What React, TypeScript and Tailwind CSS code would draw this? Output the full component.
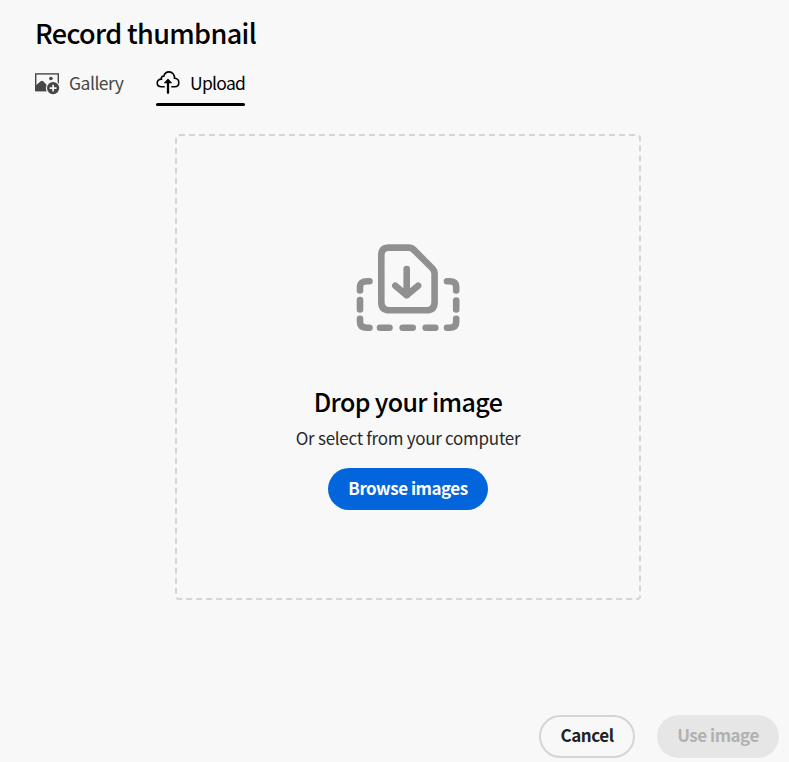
function GalleryIcon() {
  return (
    <svg width="26" height="24" viewBox="0 0 26 24" className="mt-[2px] shrink-0">
      <path d="M0 1.2H24V19.2H0Z" fill="#464646" />
      <path d="M1.4 2.6H22.6V17.8H1.4Z" fill="#f8f8f8" />
      <circle cx="15.9" cy="6.5" r="1.8" fill="#464646" />
      <path d="M0.7 19.2V13.5L5.7 9.3Q6.9 8.4 8.2 9.3L13 14.2V19.2Z" fill="#464646" />
      <circle cx="18.1" cy="16.1" r="7.3" fill="#f8f8f8" />
      <circle cx="18.1" cy="16.1" r="6.1" fill="#464646" />
      <path d="M18.1 12.7V19.5M14.7 16.1H21.5" stroke="#f8f8f8" strokeWidth="1.7" />
    </svg>
  );
}

function UploadIcon() {
  return (
    <svg width="24" height="24" viewBox="0 0 24 24" className="mt-px shrink-0" fill="none">
      <path
        d="M8.7 15.8H5.6C3 15.8 1.2 14.2 1.2 12C1.2 9.6 3.2 8 5.4 8.1C4.9 6.4 6 5 7.8 5.1C8.5 2.5 10.5 .9 13 .9C16.3 .9 18.8 3.6 18.5 7.2C21.1 7.4 22.8 9.2 22.8 11.5C22.8 14 21.1 15.8 18.7 15.8H15.3"
        stroke="#000"
        strokeWidth="1.6"
      />
      <path d="M12 21.8V10" stroke="#000" strokeWidth="2.3" strokeLinecap="round" />
      <path d="M12 7.9L15.7 11.9H8.3Z" fill="#000" stroke="#000" strokeWidth=".7" strokeLinejoin="round" />
    </svg>
  );
}

function DropIcon() {
  return (
    <svg
      width="104"
      height="89"
      viewBox="0 0 104 89"
      fill="none"
      stroke="#909090"
      strokeWidth="6.6"
      strokeLinecap="round"
      strokeLinejoin="round"
    >
      <path d="M33 4.6H52.5Q55.5 4.6 58 7L76 25Q78.6 27.6 78.6 31V59Q78.6 67.3 70.5 67.3H33.5Q25.3 67.3 25.3 59V12.5Q25.3 4.6 33 4.6Z" />
      <path d="M50.7 26V52.3M39.3 42.7L50.7 52.3L62.1 42.7" />
      <path d="M13.5 38.3H11Q4 38.3 4 44V47.5M4 57V66.5M4 75.7V79Q4 84.7 11 84.7H13.5M24 84.7H33.5M46.7 84.7H56.7M69.7 84.7H79.3M91 84.7H93.5Q100.2 84.7 100.2 79V75.7M100.2 57.5V66.5M100.2 47.5V44Q100.2 38.3 93.5 38.3H91" />
    </svg>
  );
}

export default function App() {
  return (
    <main className="flex h-[762px] w-[789px] flex-col overflow-hidden bg-[#f8f8f8] font-['Noto_Sans_CJK_SC','Open_Sans',sans-serif] text-black">
      <h1 className="ml-[35px] mt-[15px] h-9 whitespace-nowrap text-[27px] font-medium leading-9 tracking-[-0.63px]">Record thumbnail</h1>
      <nav className="ml-[35px] mt-[19px] flex h-9">
        <button className="flex h-7 w-[121px] items-start text-[#464646]">
          <GalleryIcon />
          <span className="ml-2 text-[17.5px] leading-[26px] tracking-[-0.5px]">Gallery</span>
        </button>
        <button className="flex h-9 w-[89px] items-start">
          <span className="relative flex h-9 w-full items-start after:absolute after:bottom-0 after:left-0 after:h-[3px] after:w-full after:rounded-full after:bg-black">
            <UploadIcon />
            <span className="ml-[10px] text-[17.5px] leading-[26px] tracking-[-0.7px]">Upload</span>
          </span>
        </button>
      </nav>
      <section className="ml-[175px] mt-[28px] flex h-[466px] w-[466px] flex-col items-center rounded-[4px] border-2 border-dashed border-[#d5d5d5] pt-[107px]">
        <DropIcon />
        <h2 className="mt-[51px] h-9 whitespace-nowrap text-[25px] font-medium leading-9 tracking-[-0.6px]">Drop your image</h2>
        <p className="mt-[7px] h-6 whitespace-nowrap text-[17px] leading-6 tracking-[-0.28px] text-[#292929]">Or select from your computer</p>
        <button className="mt-[18px] h-[42px] w-40 whitespace-nowrap rounded-full bg-[#0265dc] pb-[2px] text-[17px] font-bold leading-[38px] tracking-[-0.5px] text-white">
          Browse images
        </button>
      </section>
      <footer className="ml-[539px] mt-[115px] flex h-[43px] gap-[22px] whitespace-nowrap text-[17px] font-bold">
        <button className="h-[43px] w-24 rounded-full border-2 border-[#d5d5d5] pb-[4px] leading-[35px] tracking-[-0.45px] text-[#222222]">Cancel</button>
        <button disabled className="h-[43px] w-[122px] rounded-full bg-[#e6e6e6] pb-[4px] leading-[39px] tracking-[-0.48px] text-[#b1b1b1]">
          Use image
        </button>
      </footer>
    </main>
  );
}
